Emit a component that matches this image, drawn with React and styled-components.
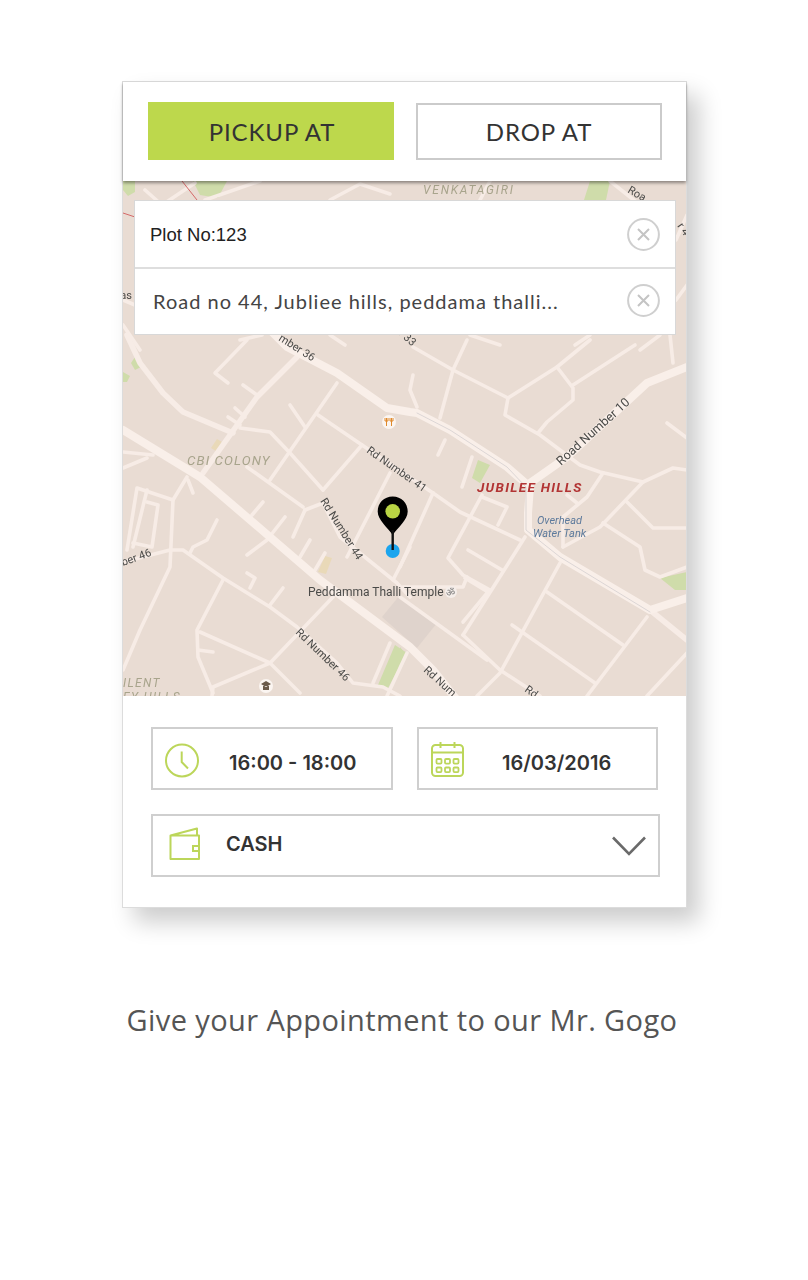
import React from "react";
import styled, { createGlobalStyle } from "styled-components";

const Global = createGlobalStyle`
  html, body { margin: 0; padding: 0; background: #fff; }
  body { font-family: "Lato", "Liberation Sans", sans-serif; }
`;

const Page = styled.div`
  width: 808px;
  height: 1280px;
  padding: 81px 0 0 122px;
  box-sizing: border-box;
  overflow: hidden;
`;

const Card = styled.section`
  width: 565px;
  box-sizing: border-box;
  border: 1px solid #dcdcdc;
  background: #fff;
  box-shadow: 12px 14px 22px rgba(0, 0, 0, 0.2);
`;

const TopBar = styled.header`
  position: relative;
  z-index: 3;
  height: 99px;
  box-sizing: border-box;
  padding: 20px 24px 0 25px;
  display: flex;
  gap: 22px;
  background: #fff;
  box-shadow: 0 2px 3px rgba(0, 0, 0, 0.4);
`;

const Tab = styled.button`
  width: 246px;
  height: ${(p) => (p.$active ? 58 : 57)}px;
  margin-top: ${(p) => (p.$active ? 0 : 1)}px;
  box-sizing: border-box;
  border: ${(p) => (p.$active ? "none" : "2px solid #cbcbcb")};
  background: ${(p) => (p.$active ? "#bdd84c" : "#fff")};
  color: #333;
  font: 400 24px "Lato", sans-serif;
  letter-spacing: 0.9px;
  padding: 0 0 0 ${(p) => (p.$active ? 2 : 0)}px;
`;

const MapArea = styled.div`
  position: relative;
  height: 515px;
  overflow: hidden;
  background: #e9dcd3;
`;

const MapSvg = styled.svg`
  display: block;
  width: 564px;
  height: 515px;
  filter: blur(0.45px);
`;

const AddressPanel = styled.div`
  position: absolute;
  left: 11px;
  top: 19px;
  width: 542px;
  box-sizing: border-box;
  border: 1px solid #d8d8d8;
  background: #fff;
`;

const AddressRow = styled.div`
  height: ${(p) => (p.$plain ? 66 : 67)}px;
  box-sizing: border-box;
  display: flex;
  align-items: center;
  justify-content: space-between;
  padding: 0 15px ${(p) => (p.$plain ? 0 : 2)}px ${(p) => (p.$plain ? 15 : 18)}px;
  border-top: ${(p) => (p.$plain ? "none" : "2px solid #dedede")};
`;

const AddressText = styled.span`
  color: ${(p) => (p.$plain ? "#222" : "#444")};
  font: ${(p) => (p.$plain ? '400 18.5px "Liberation Sans"' : '400 20px "Lato"')}, sans-serif;
  letter-spacing: ${(p) => (p.$plain ? "0" : "1px")};
  padding-top: ${(p) => (p.$plain ? 2 : 0)}px;
`;

const Form = styled.div`
  padding: 31px 26px 30px 28px;
  display: flex;
  flex-direction: column;
  gap: 24px;
`;

const FieldRow = styled.div`
  display: grid;
  grid-template-columns: 242px 241px;
  gap: 24px;
`;

const Field = styled.div`
  height: 63px;
  box-sizing: border-box;
  border: 2px solid #cfcfcf;
  display: flex;
  align-items: center;
  padding: 0 12px;
  background: #fff;
`;

const IconBox = styled.svg`
  width: 34px;
  height: 36px;
  flex: none;
  overflow: visible;
`;

const Value = styled.span`
  margin-left: ${(p) => p.$gap}px;
  margin-top: ${(p) => p.$shift || 0}px;
  color: #333;
  font: 600 20px "Inter", "Lato", sans-serif;
  flex: 1;
`;

const Caption = styled.p`
  margin: 90px 0 0;
  width: 560px;
  text-align: center;
  white-space: nowrap;
  color: #555;
  font: 400 29px "Open Sans", sans-serif;
  letter-spacing: 0.4px;
  line-height: 44px;
`;

const thick = [
  "M123 430 L200 477 L270 537 L320 580 L410 647 L433 670 L457 700",
  "M270 330 L287 347 L337 373 L387 408 L410 412 L417 413 L450 430 L507 467 L530 487 L528 513 L528 530 L560 557 L650 610 L687 598",
  "M530 483 L567 457 L647 383 L687 367",
];
const medium = [
  "M127 335 L140 363 L163 393 L183 412 L233 433",
  "M650 610 L687 640",
  "M297 357 L257 397 L203 473",
];
const thin = [
  "M240 428 L270 432 L290 453 L323 490",
  "M247 340 L215 373 L228 383", "M243 385 L257 395", "M235 408 L245 417", "M228 417 L240 425",
  "M337 383 L270 480", "M290 405 L305 427", "M318 415 L362 445 L433 493", "M362 445 L323 490",
  "M247 467 L303 507", "M305 510 L293 537", "M305 510 L323 503", "M263 502 L252 515",
  "M285 517 L267 540 L247 555", "M310 540 L300 557", "M325 553 L315 570", "M390 473 L347 557",
  "M323 503 L340 537 L397 583 L410 597", "M410 547 L393 580",
  "M120 563 L170 550 L183 550 L223 578 L270 607 L297 627 L337 663 L353 683 L383 687 L400 696",
  "M217 520 L207 540 L193 547 L190 553", "M187 477 L173 500 L170 567 L140 630 L123 670", "M188 480 L193 493",
  "M173 500 L137 488 L127 550", "M147 490 L133 547", "M147 502 L158 505 L152 547 L133 543",
  "M123 452 L153 455", "M123 468 L147 458", "M247 573 L255 578 L250 588", "M283 588 L270 605",
  "M223 580 L197 630 L198 657 L213 693", "M200 632 L270 663 L300 693", "M198 650 L213 652",
  "M333 597 L270 663 L213 687 L212 696", "M390 643 L373 683", "M407 653 L387 696",
  "M467 340 L453 370 L440 418", "M413 347 L453 370 L508 398", "M508 398 L557 367 L590 340",
  "M557 367 L573 388 L573 400 L547 422 L538 433", "M573 385 L635 345",
  "M508 398 L505 415 L540 435 L580 465 L600 472 L643 482 L673 468 L687 470",
  "M670 335 L673 363", "M667 423 L687 438", "M413 375 L410 390 L417 407", "M445 440 L438 455", "M472 457 L462 487",
  "M433 493 L460 512 L520 540", "M433 493 L400 567", "M482 495 L448 558 L463 575 L490 590",
  "M482 497 L507 507 L498 525", "M468 550 L502 570", "M525 537 L463 635", "M465 578 L488 592 L463 622",
  "M403 587 L463 587 L467 577", "M400 597 L487 660", "M463 635 L500 670 L540 696",
  "M560 563 L500 673 L477 696", "M547 592 L623 645", "M512 625 L595 683", "M647 617 L587 696",
  "M687 653 L647 696", "M603 473 L587 497 L563 517 L563 547", "M567 495 L577 503",
  "M643 482 L600 527 L563 547", "M627 502 L653 528 L687 528", "M603 523 L640 547 L645 570 L660 577 L687 567",
  "M145 190 L162 205 L195 183", "M205 200 L260 181", "M330 200 L360 184 L390 194", "M480 200 L490 181",
  "M610 181 L640 205", "M123 300 L135 305", "M123 325 L140 350", "M676 300 L687 285", "M676 240 L687 215",
  "M240 340 L262 335", "M330 335 L345 345", "M470 335 L500 345", "M590 335 L575 345", "M660 335 L640 350",
];
const greens = [
  "395,645 407,653 387,690 378,685", "472,478 478,460 490,465 480,483", "660,578 687,572 687,590 675,590",
  "131,363 137,354 143,366 135,370", "123,372 130,376 127,382 123,382", "193,181 227,181 218,198 200,195",
  "584,200 590,181 610,181 606,200", "123,181 135,181 135,192 128,196 123,190", "400,647 403,651 400,660",
];
const labels = [
  { t: "ber 46", x: 123, y: 566, r: -20 },
  { t: "mber 36", x: 278, y: 340, r: 32 },
  { t: "r 33", x: 398, y: 334, r: 42 },
  { t: "Rd Number 41", x: 366, y: 452, r: 35 },
  { t: "Rd Number 44", x: 320, y: 501, r: 58 },
  { t: "Rd Number 46", x: 295, y: 633, r: 44 },
  { t: "Road Number 10", x: 561, y: 466, r: -42, s: 12.5 },
  { t: "Rd Num", x: 423, y: 671, r: 42 },
  { t: "Rd", x: 524, y: 691, r: 35 },
  { t: "Roa", x: 627, y: 192, r: 30 },
  { t: "Das", x: 113, y: 299, r: 0 },
  { t: "r 4", x: 677, y: 226, r: 55 },
];

const Road = styled.path`
  fill: none;
  stroke: ${(p) => p.$color || "#f7ece6"};
  stroke-width: ${(p) => p.$w}px;
  stroke-linejoin: round;
  stroke-linecap: round;
`;

const MapLabel = styled.text`
  font-family: "Roboto", "Liberation Sans", sans-serif;
  font-size: ${(p) => p.$s || 11}px;
  fill: ${(p) => p.$fill || "#4a4a48"};
  font-style: ${(p) => (p.$italic ? "italic" : "normal")};
  font-weight: ${(p) => (p.$bold ? 700 : 400)};
  letter-spacing: ${(p) => p.$track || 0}px;
`;

function MapDrawing() {
  return (
    <MapSvg viewBox="123 181 564 515" aria-label="Map">
      <rect x="123" y="181" width="564" height="515" fill="#e9dcd3" />
      {greens.map((g) => <polygon key={g} points={g} fill="#cfdcaa" />)}
      <polygon points="382,617 400,595 437,623 417,648" fill="#dfd3cc" />
      <polygon points="211,448 217,439 222,442 216,451" fill="#e9d9b8" />
      <polygon points="318,572 325,556 332,558 326,574" fill="#e9d9b8" />
      {thin.map((d) => <Road key={d} d={d} $w={3.6} />)}
      {medium.map((d) => <Road key={d} d={d} $w={5.5} />)}
      {thick.map((d) => <Road key={d} d={d} $w={8} $color="#f9efe9" />)}
      <Road d="M417 413 L450 430 L507 467 L526 487 L526 530 L560 557 L650 612" $w={0.6} $color="#c8c4c8" />
      <Road d="M182 181 L197 200" $w={1} $color="#d46a6a" />
      <Road d="M123 213 L135 217" $w={1} $color="#d46a6a" />

      {labels.map((l) => (
        <MapLabel key={l.t} x={l.x} y={l.y} $s={l.s} transform={`rotate(${l.r} ${l.x} ${l.y})`}>{l.t}</MapLabel>
      ))}
      <MapLabel x="187" y="465" $s={13.3} $italic $track={1.1} $fill="#a8a48c">CBI COLONY</MapLabel>
      <MapLabel x="423" y="194" $s={12} $italic $track={1.8} $fill="#a8a48c">VENKATAGIRI</MapLabel>
      <MapLabel x="123" y="687" $s={12} $italic $track={1.3} $fill="#a8a48c">ILENT</MapLabel>
      <MapLabel x="123" y="701" $s={12} $italic $track={1.3} $fill="#a8a48c">EY HILLS</MapLabel>
      <MapLabel x="477" y="492" $s={13.5} $italic $bold $track={1.3} $fill="#b23434">JUBILEE HILLS</MapLabel>
      <MapLabel x="537" y="524" $s={11} $italic $fill="#5d7a9c">Overhead</MapLabel>
      <MapLabel x="533" y="537" $s={11} $italic $fill="#5d7a9c">Water Tank</MapLabel>
      <MapLabel x="308" y="596" $s={12} $fill="#4a4a48">Peddamma Thalli Temple</MapLabel>

      <circle cx="451" cy="592" r="6" fill="#f5eeea" />
      <MapLabel x="446" y="596" $s={10} $fill="#777">ॐ</MapLabel>
      <circle cx="389" cy="422" r="7" fill="#fbf5f1" />
      <path d="M386.5 418 V426 M391.5 418 V426 M385 418 V421 H388 V418 M390 418 V421 H393 V418" stroke="#e08a2c" strokeWidth="1" fill="none" />
      <circle cx="266" cy="686" r="7" fill="#fbf5f1" />
      <path d="M261 684 L266 681 L271 684 L266 687 Z M263 686 V690 H269 V686" fill="#6b5a4a" />

      <path d="M392.7 496.5 C384 496.5 377.7 503 377.7 511.5 C377.7 520 388 528 392.7 535 C397.4 528 407.7 520 407.7 511.5 C407.7 503 401.4 496.5 392.7 496.5 Z" fill="#000" />
      <circle cx="392.7" cy="511.3" r="7.3" fill="#b9d444" />
      <circle cx="392.7" cy="551" r="7" fill="#1ba5ee" />
      <rect x="391.5" y="530" width="2.4" height="20" fill="#111" />
    </MapSvg>
  );
}

const CloseIcon = () => (
  <svg width="33" height="33" viewBox="0 0 33 33">
    <circle cx="16.5" cy="16.5" r="15.4" fill="none" stroke="#cfcfcf" strokeWidth="2" />
    <path d="M11 11 L22 22 M22 11 L11 22" stroke="#c4c4c4" strokeWidth="2" />
  </svg>
);

const lime = "#bcd65a";

const ClockIcon = () => (
  <IconBox viewBox="0 0 34 36">
    <circle cx="17" cy="19.5" r="16" fill="none" stroke={lime} strokeWidth="2" />
    <path d="M16.7 10.5 V21 L23 27.5" fill="none" stroke={lime} strokeWidth="2" />
  </IconBox>
);

const CalendarIcon = () => (
  <IconBox viewBox="0 0 34 36">
    <rect x="1" y="4" width="31" height="31" rx="3.5" fill="none" stroke={lime} strokeWidth="2" />
    <path d="M1 11.5 H32 M9.5 1 V7 M23.5 1 V7" fill="none" stroke={lime} strokeWidth="2" />
    {[5.5, 14, 22.5].map((x) => [18, 26.5].map((y) => (
      <rect key={`${x}-${y}`} x={x} y={y} width="5" height="4.6" rx="1" fill="none" stroke={lime} strokeWidth="1.8" />
    )))}
  </IconBox>
);

const WalletIcon = () => (
  <IconBox viewBox="0 0 34 36">
    <path d="M5.5 7.5 L32 0.5 V7.5 M5.5 7.5 H34 V31 H5.5 Z" fill="none" stroke={lime} strokeWidth="2" strokeLinejoin="round" />
    <path d="M34 18 H28 V23 H34" fill="none" stroke={lime} strokeWidth="2" />
  </IconBox>
);

const Chevron = styled.svg`
  width: 34px;
  height: 20px;
  flex: none;
`;

export default function App() {
  return (
    <Page>
      <Global />
      <Card>
        <TopBar>
          <Tab $active>PICKUP AT</Tab>
          <Tab>DROP AT</Tab>
        </TopBar>
        <MapArea>
          <MapDrawing />
          <AddressPanel>
            <AddressRow $plain>
              <AddressText $plain>Plot No:123</AddressText>
              <CloseIcon />
            </AddressRow>
            <AddressRow>
              <AddressText>Road no 44, Jubliee hills, peddama thalli...</AddressText>
              <CloseIcon />
            </AddressRow>
          </AddressPanel>
        </MapArea>
        <Form>
          <FieldRow>
            <Field>
              <ClockIcon />
              <Value $gap={30} $shift={8}>16:00 - 18:00</Value>
            </Field>
            <Field>
              <CalendarIcon />
              <Value $gap={37} $shift={8}>16/03/2016</Value>
            </Field>
          </FieldRow>
          <Field>
            <WalletIcon />
            <Value $gap={27} $shift={-4}>CASH</Value>
            <Chevron viewBox="0 0 34 20">
              <path d="M1 1.5 L17 18 L33 1.5" fill="none" stroke="#6a6a6a" strokeWidth="2.6" />
            </Chevron>
          </Field>
        </Form>
      </Card>
      <Caption>Give your Appointment to our Mr. Gogo</Caption>
    </Page>
  );
}
